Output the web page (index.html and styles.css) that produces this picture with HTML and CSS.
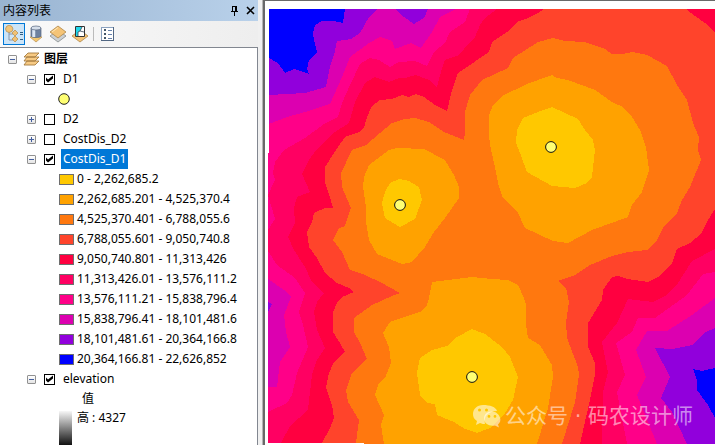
FILE: index.html
```html
<!DOCTYPE html>
<html lang="zh-CN">
<head>
<meta charset="utf-8">
<title>内容列表</title>
<link rel="stylesheet" href="styles.css">
</head>
<body>
<div class="app">
  <aside class="panel">
    <header class="titlebar">
      <h1 class="title">内容列表</h1>
      <button class="title-btn" type="button" aria-label="自动隐藏"><svg width="9" height="10" viewBox="0 0 9 10" shape-rendering="crispEdges"><path d="M2 0h5v5h1v1H5v4H4V6H1V5h1zM3 1v4h2V1z" fill="#000" fill-rule="evenodd"/></svg></button>
      <button class="title-btn" type="button" aria-label="关闭"><svg width="9" height="9" viewBox="0 0 9 9"><path d="M1 1l7 7M8 1L1 8" stroke="#000" stroke-width="1.6"/></svg></button>
    </header>
    <div class="toolbar">
      <button class="tool tool-active" type="button" aria-label="按绘制顺序列出"><svg width="18" height="18" viewBox="0 0 18 18"><path d="M4 7v8h4M4 9h4" fill="none" stroke="#8b96a8"/><path d="M4 0l3 1.500 1 2.500-1 2.500-3 1-2.500-1L.5 4l1-2.500z" fill="#f2c57a" stroke="#b58a49" stroke-width=".7"/><path d="M10 5l3 3-3 3-3-3zM10 11l3 3-3 3-3-3z" fill="#f1c173" stroke="#b58a49" stroke-width=".7"/><path d="M15 7.500h3M15 9.500h3M15 14.500h3" stroke="#315e83" stroke-width="1.200"/></svg></button>
      <button class="tool" type="button" aria-label="按源列出"><svg width="18" height="18" viewBox="0 0 18 18"><path d="M3 12l6-2 6 2-6 5z" fill="#f5c86f" stroke="#b78e52" stroke-width=".7"/><path d="M4 3v8c0 2 10 2 10 0V3z" fill="#6e819f" stroke="#56657e" stroke-width=".7"/><path d="M6 4v8M7.500 4v8" stroke="#dbe6f4" stroke-width="1.500"/><ellipse cx="9" cy="3" rx="5" ry="2" fill="#d5deea" stroke="#56657e" stroke-width=".7"/></svg></button>
      <button class="tool" type="button" aria-label="按可见性列出"><svg width="18" height="18" viewBox="0 0 18 18"><path d="M1 11l8-6 8 6-8 6z" fill="#ccd0d3" stroke="#868b8e" stroke-width=".8"/><path d="M1 7l8-6 8 6-8 6z" fill="#f5c477" stroke="#ae8649" stroke-width=".8"/><path d="M3 7l6-4.500" stroke="#ffe7b5"/></svg></button>
      <button class="tool" type="button" aria-label="按选择列出"><svg width="18" height="18" viewBox="0 0 18 18"><path d="M1 11l8-6 8 6-8 6z" fill="#f5c477" stroke="#ae8649" stroke-width=".8"/><path d="M4.500 1.500h9v10h-9z" fill="#fff" stroke="#333"/><path d="M5 2h6L9 6l-2 1v4H5z" fill="#20d8ec"/><path d="M11 2L9 6 7 7v4M9 6l4 1" fill="none" stroke="#345" stroke-width=".8"/></svg></button>
      <span class="separator"></span>
      <button class="tool" type="button" aria-label="选项"><svg width="14" height="15" viewBox="0 0 14 15" shape-rendering="crispEdges"><path d="M.5.5h12v13H.5z" fill="#fff" stroke="#8aa1bf"/><path d="M12.500 0v14M0 13.500h13" stroke="#526783"/><path d="M3 2h2v2H3zM3 6h2v2H3zM3 10h2v2H3z" fill="#456"/><path d="M7 3.500h4M7 7.500h4M7 11.500h4" stroke="#6681ab"/></svg></button>
    </div>
    <main class="tree">
      <div class="row root">
        <button class="expander" type="button" aria-label="折叠图层"></button>
        <svg class="stack" width="17" height="14" viewBox="0 0 17 14"><g fill="#f7ca84" stroke="#a57c40" stroke-width=".9"><path d="M1 13l3-4h12l-4 4zM1 9l3-4h12l-4 4zM1 5l4-4h11l-4 4z"/></g></svg>
        <b>图层</b>
      </div>
      <div class="row layer"><button class="expander" type="button" aria-label="折叠 D1"></button><input class="check" type="checkbox" id="d1" checked><label class="name" for="d1">D1</label></div>
      <div class="row symbol"><svg width="12" height="12" viewBox="0 0 12 12"><circle cx="6" cy="6" r="5.300" fill="#ffff73" stroke="#222"/></svg></div>
      <div class="row layer"><button class="expander closed" type="button" aria-label="展开 D2"></button><input class="check" type="checkbox" id="d2"><label class="name" for="d2">D2</label></div>
      <div class="row layer"><button class="expander closed" type="button" aria-label="展开 CostDis_D2"></button><input class="check" type="checkbox" id="cost2"><label class="name" for="cost2">CostDis_D2</label></div>
      <div class="row layer"><button class="expander" type="button" aria-label="折叠 CostDis_D1"></button><input class="check" type="checkbox" id="cost1" checked><label class="name selected" for="cost1">CostDis_D1</label></div>
      <div class="row class"><i class="swatch c1"></i>0 - 2,262,685.2</div>
      <div class="row class"><i class="swatch c2"></i>2,262,685.201 - 4,525,370.4</div>
      <div class="row class"><i class="swatch c3"></i>4,525,370.401 - 6,788,055.6</div>
      <div class="row class"><i class="swatch c4"></i>6,788,055.601 - 9,050,740.8</div>
      <div class="row class"><i class="swatch c5"></i>9,050,740.801 - 11,313,426</div>
      <div class="row class"><i class="swatch c6"></i>11,313,426.01 - 13,576,111.2</div>
      <div class="row class"><i class="swatch c7"></i>13,576,111.21 - 15,838,796.4</div>
      <div class="row class"><i class="swatch c8"></i>15,838,796.41 - 18,101,481.6</div>
      <div class="row class"><i class="swatch c9"></i>18,101,481.61 - 20,364,166.8</div>
      <div class="row class"><i class="swatch c10"></i>20,364,166.81 - 22,626,852</div>
      <div class="row layer"><button class="expander" type="button" aria-label="折叠 elevation"></button><input class="check" type="checkbox" id="elev" checked><label class="name" for="elev">elevation</label></div>
      <div class="row value">值</div>
      <div class="ramp"><i class="ramp-bar"></i><span>高 : 4327</span></div>
    </main>
  </aside>
  <section class="map-pane">
    <svg class="map" viewBox="268 9 447 435" role="img" aria-label="CostDis_D1">
      <g shape-rendering="crispEdges">
        <path class="f4" d="M269 9H715V444H364V443H268V153H269z"/>
        <path class="f5" d="M269 9H544L538 13 528 18 517 22 507 32 492 42 489 52 480 58 470 65 458 73 452 90 447 111 435 105 424 97 416 94 409 97 402 95 392 99 380 100 372 106 367 117 364 128 359 132 345 137 336 150 325 167V183L330 197 333 208H325L314 213 312 222 307 232 309 247 317 258 325 273 337 283 349 288 354 292 342 297 337 303 333 312V332L340 343 345 352 334 362 329 373 326 388 332 405 334 418 330 428 322 443H268V153H269z"/>
        <path class="f6" d="M269 9H497L485 18 480 25 475 37 469 43 459 55 445 60 442 68 437 87 429 80 416 75 405 78H399L389 82 375 77 365 83 355 102 349 123 335 132 316 150 309 160 302 174 310 192 297 197 294 208 295 223 288 237 294 250 305 267 312 282 324 293 317 302 314 312 317 330 325 348 317 360 312 375 310 392 308 410 290 426 281 443H268V153H269z"/>
        <path class="f7" d="M269 9H470L465 22 450 32 445 43 434 52 427 66 415 61 399 62 390 67 379 60 370 58 360 64 350 85 342 103 338 117 324 124 305 138 284 150 275 162 273 173 275 180 268 195V153H269zM268 195L275 219 268 230zM268 251L277 265 295 278 305 293 299 312 303 325 308 347 297 373 292 395 287 403 268 412z"/>
        <path class="f8" d="M269 9H456L440 17 432 32 421 48 411 43 395 49 392 41 380 37 369 43 350 57 342 77 330 104 305 112 287 117 269 124zM268 279L284 290 291 297 284 315 286 332 290 347 280 362 277 387H268z"/>
        <path class="f9" d="M269 9H377L369 17 360 33 351 39 337 41 334 55 330 67 326 87 305 93 269 95zM395 9L404 17 414 24 424 18 428 9zM268 302L272 304 268 312z"/>
        <path class="f10" d="M269 9H345L343 23 333 21H322L315 25 313 33 314 40 317 52 309 60 307 69 309 74 301 71 294 69 285 73 278 63 269 58z"/>
        <path class="f5" d="M686 9L695 16 708 25 715 33V9zM715 209L708 220 701 234 690 243 677 249 672 263 658 277 648 282 628 279 618 276 612 277 603 290 602 300 588 323V347L595 363V375L591 395 580 444H715z"/>
        <path class="f6" d="M715 249L692 261 678 283 667 295 653 302 628 299 617 323 602 342 608 372 603 392 602 444H715z"/>
        <path class="f7" d="M715 272L703 274 687 295 655 318H638L632 332 616 343 625 375 617 392 627 444H715z"/>
        <path class="f8" d="M715 298L692 315 667 331H647L636 350 646 377 637 395 657 444H715z"/>
        <path class="f9" d="M715 328L706 332 692 345 672 349 655 348 670 377 661 398 672 412 687 444H715z"/>
        <path class="f10" d="M715 368L702 371 693 369 697 380V390L708 405 715 418z"/>
        <path class="f3" d="M482 80L508 68 513 58 538 42 553 38 565 41 585 42 605 49 612 54H622L633 52 647 55 667 66 677 85 687 100 693 123 699 137 698 150 701 160 690 187 682 200 677 213 663 228 657 240 647 250 628 252 612 256 590 265 575 275 558 281 566 288 569 302 566 322 567 338 578 367 579 375 575 402 562 444H364V443H356L359 420 348 402 346 390 352 373 367 359 360 343 354 332V318L372 305 392 296 400 293 382 283 365 275 350 270 342 252 333 240 339 228 345 226 351 208 342 187 341 173 352 150 366 145 380 133 392 123 405 119 415 118 429 122 444 132 464 140 465 133V112L470 95z"/>
        <g class="f2">
          <path d="M491 150L489 137V115L493 105 502 96 527 84 552 75 557 78 568 80 595 90 612 102 623 107 632 117 640 130 646 147 649 170 642 192 632 205 628 217 592 230 568 243 553 241 525 228 518 213 503 198 498 183 495 167z"/>
          <path d="M389 150L397 148 424 149 445 160 454 175 459 187V198L445 218 434 232 425 247 412 262 402 264 377 254 369 240 366 222V207L363 187 364 177 369 165z"/>
          <path d="M384 444L381 425 384 415 375 395 379 383 385 378 391 363 389 347 383 333 390 322 422 311 427 305 429 298 432 282 472 277 492 279 508 280 518 285 524 298 526 305V325L528 338 540 345 552 365 553 377 548 408 537 444z"/>
        </g>
        <g class="f1">
          <path d="M516 143L517 130 523 118 538 112 552 107 578 119 585 130 593 140 595 150 592 177 587 183 575 188 552 186 527 172 520 153z"/>
          <path d="M399 179L409 181 419 187 422 200 415 219 400 227 385 218 382 203 385 192 390 183z"/>
          <path d="M472 329L457 337 447 346 432 350 420 358 417 373 420 395 427 403 435 404 437 415 454 422 465 429 477 433 490 428 505 413 513 400 518 377 510 357 502 347 485 334z"/>
        </g>
      </g>
      <g class="site"><circle cx="551" cy="147" r="5.400"/><circle cx="400" cy="205" r="5.400"/><circle cx="472" cy="377" r="5.400"/></g>
      <g class="brand">
        <path fill-rule="evenodd" d="M483 405c-6 0-10 4-10 9 0 3 1 5 4 7l-1 4 4-2c2 1 4 1 5 1-2-8 4-13 12-13-1-4-7-6-14-6zM479.500 408.500a1.500 1.500 0 1 0 0 3 1.500 1.500 0 0 0 0-3zM486.500 408.500a1.500 1.500 0 1 0 0 3 1.500 1.500 0 0 0 0-3z"/>
        <path fill-rule="evenodd" d="M492 411.500c-5 0-8 3-8 7 0 5 5 8 11 7l4 2-1-3c2-2 3-4 2-7-1-3-4-6-8-6zM489 415a1.400 1.400 0 1 0 0 2.800 1.400 1.400 0 0 0 0-2.800zM495 415a1.400 1.400 0 1 0 0 2.800 1.400 1.400 0 0 0 0-2.800z"/>
        <text x="505" y="423">公众号 · 码农设计师</text>
      </g>
    </svg>
  </section>
</div>
</body>
</html>
```
FILE: styles.css
```css
* { box-sizing: border-box; }
body {
  margin: 0;
  background: #fff;
  color: #000;
  font-family: "Noto Sans", "Noto Sans CJK SC", sans-serif;
  font-size: 12px;
  line-height: 20px;
}
button { padding: 0; border: 0; background: none; }
svg { display: block; }
.app { display: flex; height: 100vh; overflow: hidden; background: #f0f0f0; }

.panel { display: flex; flex-direction: column; flex: 0 0 258px; margin-right: 4px; }
.titlebar {
  display: flex;
  align-items: center;
  flex: 0 0 21px;
  padding-left: 3px;
  background: linear-gradient(90deg, #99b4d1, #b9d1ea);
}
.title { flex: 1; margin: 0; font-size: 12px; font-weight: 400; line-height: 20px; }
.title-btn { display: grid; place-items: center; width: 16px; height: 18px; }
.toolbar {
  display: flex;
  align-items: center;
  flex: 0 0 26px;
  padding-left: 3px;
  background: linear-gradient(90deg, #fafafa, #eee);
}
.tool { display: grid; place-items: center; width: 22px; height: 22px; }
.tool-active { background: #cce4f7; border: 1px solid #0078d7; }
.separator { width: 1px; height: 14px; margin: 0 3px 0 2px; background: #bbb; }

.tree {
  flex: 1;
  min-height: 0;
  display: flex;
  flex-direction: column;
  padding-top: 1px;
  border-top: 1px solid #828790;
  border-right: 1px solid #828790;
  background: #fff;
  white-space: nowrap;
  overflow: hidden;
}
.row { display: flex; align-items: center; flex: 0 0 20px; }
.root { padding-left: 8px; }
.stack { margin: 0 4px 0 6px; }
.layer { padding-left: 27px; }
.symbol { padding-left: 58px; }
.class { gap: 3px; padding-left: 59px; }
.value { padding-left: 82px; flex-basis: 18px; }
.expander {
  position: relative;
  width: 9px;
  height: 9px;
  border: 1px solid #919191;
  border-radius: 1px;
  background: linear-gradient(#fff, #e4e4e4);
}
.expander::before, .expander.closed::after {
  content: "";
  position: absolute;
  top: 3px;
  left: 1px;
  width: 5px;
  height: 1px;
  background: #4560a0;
}
.expander.closed::after { top: 1px; left: 3px; width: 1px; height: 5px; }
.check {
  appearance: none;
  width: 11px;
  height: 11px;
  margin: 0 6px 0 8px;
  border: 1px solid #000;
  background: #fff;
}
.check:checked::before {
  content: "";
  display: block;
  width: 9px;
  height: 9px;
  background: #000;
  clip-path: polygon(1px 3px, 3px 5px, 8px 1px, 8px 4px, 3px 8px, 1px 6px);
}
.name { padding: 0 2px; }
.selected { background: #0078d7; color: #fff; }
.swatch { width: 15px; height: 11px; border: 1px solid #6e6e6e; }
.ramp { display: flex; flex: 1; gap: 5px; padding: 2px 0 0 59px; line-height: 14px; }
.ramp-bar { width: 13px; background: linear-gradient(#f7f7f7, #111); }

.map-pane {
  flex: 1;
  min-width: 0;
  padding: 8px 0 0 3px;
  border-top: 1px solid #696969;
  border-left: 2px solid #696969;
  background: #fff;
  box-shadow: -1px 0 #b4b4b4;
  margin-left: 1px;
}
.map { width: 100%; height: auto; }

.c1 { background: #ffc800; } .f1 { fill: #ffc800; }
.c2 { background: #ffa200; } .f2 { fill: #ffa200; }
.c3 { background: #ff780f; } .f3 { fill: #ff780f; }
.c4 { background: #ff442b; } .f4 { fill: #ff442b; }
.c5 { background: #ff0040; } .f5 { fill: #ff0040; }
.c6 { background: #ff0062; } .f6 { fill: #ff0062; }
.c7 { background: #ff0088; } .f7 { fill: #ff0088; }
.c8 { background: #dc00b0; } .f8 { fill: #dc00b0; }
.c9 { background: #9100dc; } .f9 { fill: #9100dc; }
.c10 { background: #0000ff; } .f10 { fill: #0000ff; }
.site { fill: #ffff73; stroke: #111; }
.brand { fill: rgba(255, 255, 255, 0.55); font-family: "DejaVu Sans", "Noto Sans CJK SC", sans-serif; font-size: 21px; }
```
